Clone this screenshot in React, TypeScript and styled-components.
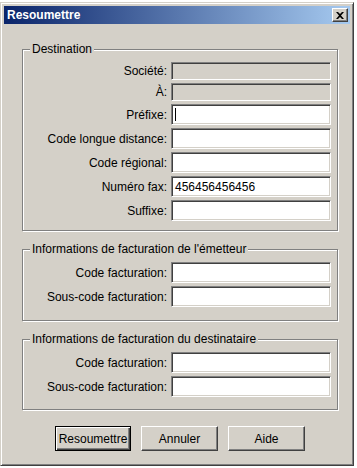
import React from "react";
import styled, { createGlobalStyle } from "styled-components";

const Global = createGlobalStyle`
  html, body { margin: 0; padding: 0; background: #ffffff; }
  body { font-family: "Liberation Sans", Arial, sans-serif; font-size: 12px; color: #000; }
`;

const Win = styled.div`
  box-sizing: border-box;
  width: 354px;
  height: 464px;
  margin-top: 2px;
  background: #d4d0c8;
  border: 1px solid;
  border-color: #d4d0c8 #404040 #404040 #d4d0c8;
  box-shadow: inset 1px 1px 0 #ffffff, inset -1px -1px 0 #808080;
  padding: 3px;
  display: flex;
  flex-direction: column;
`;

const TitleBar = styled.div`
  height: 18px;
  background: linear-gradient(to right, #0a246a, #a6caf0);
  display: flex;
  align-items: center;
  justify-content: space-between;
  padding: 0 2px 0 3px;
`;

const Title = styled.span`
  color: #ffffff;
  font-weight: bold;
  font-family: "Liberation Sans", Arial, sans-serif;
  font-size: 12px;
`;

const CloseBtn = styled.div`
  box-sizing: border-box;
  width: 16px;
  height: 14px;
  background: #d4d0c8;
  border: 1px solid;
  border-color: #ffffff #404040 #404040 #ffffff;
  box-shadow: inset -1px -1px 0 #808080;
  display: flex;
  align-items: center;
  justify-content: center;
`;

const Body = styled.div`
  flex: 1;
  display: flex;
  flex-direction: column;
  padding: 18px 12px 0 18px;
`;

const Group = styled.fieldset<{ $pb: number; $mt: number }>`
  margin: ${(p) => p.$mt}px 0 0 0;
  padding: 6px 6px ${(p) => p.$pb}px 0;
  border: 1px solid #808080;
  box-shadow: 1px 1px 0 #ffffff, inset 1px 1px 0 #ffffff;
  display: flex;
  flex-direction: column;
  gap: 3px;
  min-width: 0;
`;

const Legend = styled.legend`
  padding: 0 2px;
  margin-left: 7px;
  background: #d4d0c8;
  line-height: 14px;
`;

const Row = styled.div`
  display: grid;
  grid-template-columns: 144px 1fr;
  column-gap: 4px;
  align-items: center;
`;

const Label = styled.span`
  text-align: right;
  white-space: nowrap;
`;

const Field = styled.div<{ $disabled?: boolean }>`
  box-sizing: border-box;
  height: ${(p) => (p.$disabled ? 18 : 21)}px;
  background: ${(p) => (p.$disabled ? "#d4d0c8" : "#ffffff")};
  border: 1px solid;
  border-color: #808080 #ffffff #ffffff #808080;
  box-shadow: inset 1px 1px 0 #404040, inset -1px -1px 0 #d4d0c8;
  padding: 0 3px;
  display: flex;
  align-items: center;
  font-size: 12px;
`;

const Caret = styled.span`
  width: 1px;
  height: 13px;
  background: #000;
`;

const Buttons = styled.div`
  display: flex;
  gap: 10px;
  margin-top: 16px;
  padding-left: 33px;
`;

const Button = styled.div<{ $default?: boolean }>`
  box-sizing: border-box;
  width: ${(p) => (p.$default ? 76 : 77)}px;
  height: 25px;
  display: flex;
  align-items: center;
  justify-content: center;
  background: #d4d0c8;
  border: 1px solid;
  border-color: ${(p) => (p.$default ? "#000000" : "#ffffff #404040 #404040 #ffffff")};
  box-shadow: ${(p) =>
    p.$default
      ? "inset 1px 1px 0 #ffffff, inset -1px -1px 0 #404040, inset -2px -2px 0 #808080"
      : "inset -1px -1px 0 #808080"};
`;

type R = { label: string; value?: string; disabled?: boolean; caret?: boolean };

const dest: R[] = [
  { label: "Société:", disabled: true },
  { label: "À:", disabled: true },
  { label: "Préfixe:", caret: true },
  { label: "Code longue distance:" },
  { label: "Code régional:" },
  { label: "Numéro fax:", value: "456456456456" },
  { label: "Suffixe:" },
];

const billing: R[] = [{ label: "Code facturation:" }, { label: "Sous-code facturation:" }];

const Rows = ({ rows }: { rows: R[] }) => (
  <>
    {rows.map((r) => (
      <Row key={r.label}>
        <Label>{r.label}</Label>
        <Field $disabled={r.disabled}>
          {r.caret ? <Caret /> : r.value}
        </Field>
      </Row>
    ))}
  </>
);

export default function App() {
  return (
    <>
      <Global />
      <Win>
        <TitleBar>
          <Title>Resoumettre</Title>
          <CloseBtn>
            <svg width="8" height="7" viewBox="0 0 8 7">
              <path d="M0 0h2l2 2 2-2h2L5 3.5 8 7H6L4 5 2 7H0l3-3.5z" fill="#000" />
            </svg>
          </CloseBtn>
        </TitleBar>
        <Body>
          <Group $mt={0} $pb={9}>
            <Legend>Destination</Legend>
            <Rows rows={dest} />
          </Group>
          <Group $mt={11} $pb={13}>
            <Legend>Informations de facturation de l'émetteur</Legend>
            <Rows rows={billing} />
          </Group>
          <Group $mt={11} $pb={12}>
            <Legend>Informations de facturation du destinataire</Legend>
            <Rows rows={billing} />
          </Group>
          <Buttons>
            <Button $default>Resoumettre</Button>
            <Button>Annuler</Button>
            <Button>Aide</Button>
          </Buttons>
        </Body>
      </Win>
    </>
  );
}
